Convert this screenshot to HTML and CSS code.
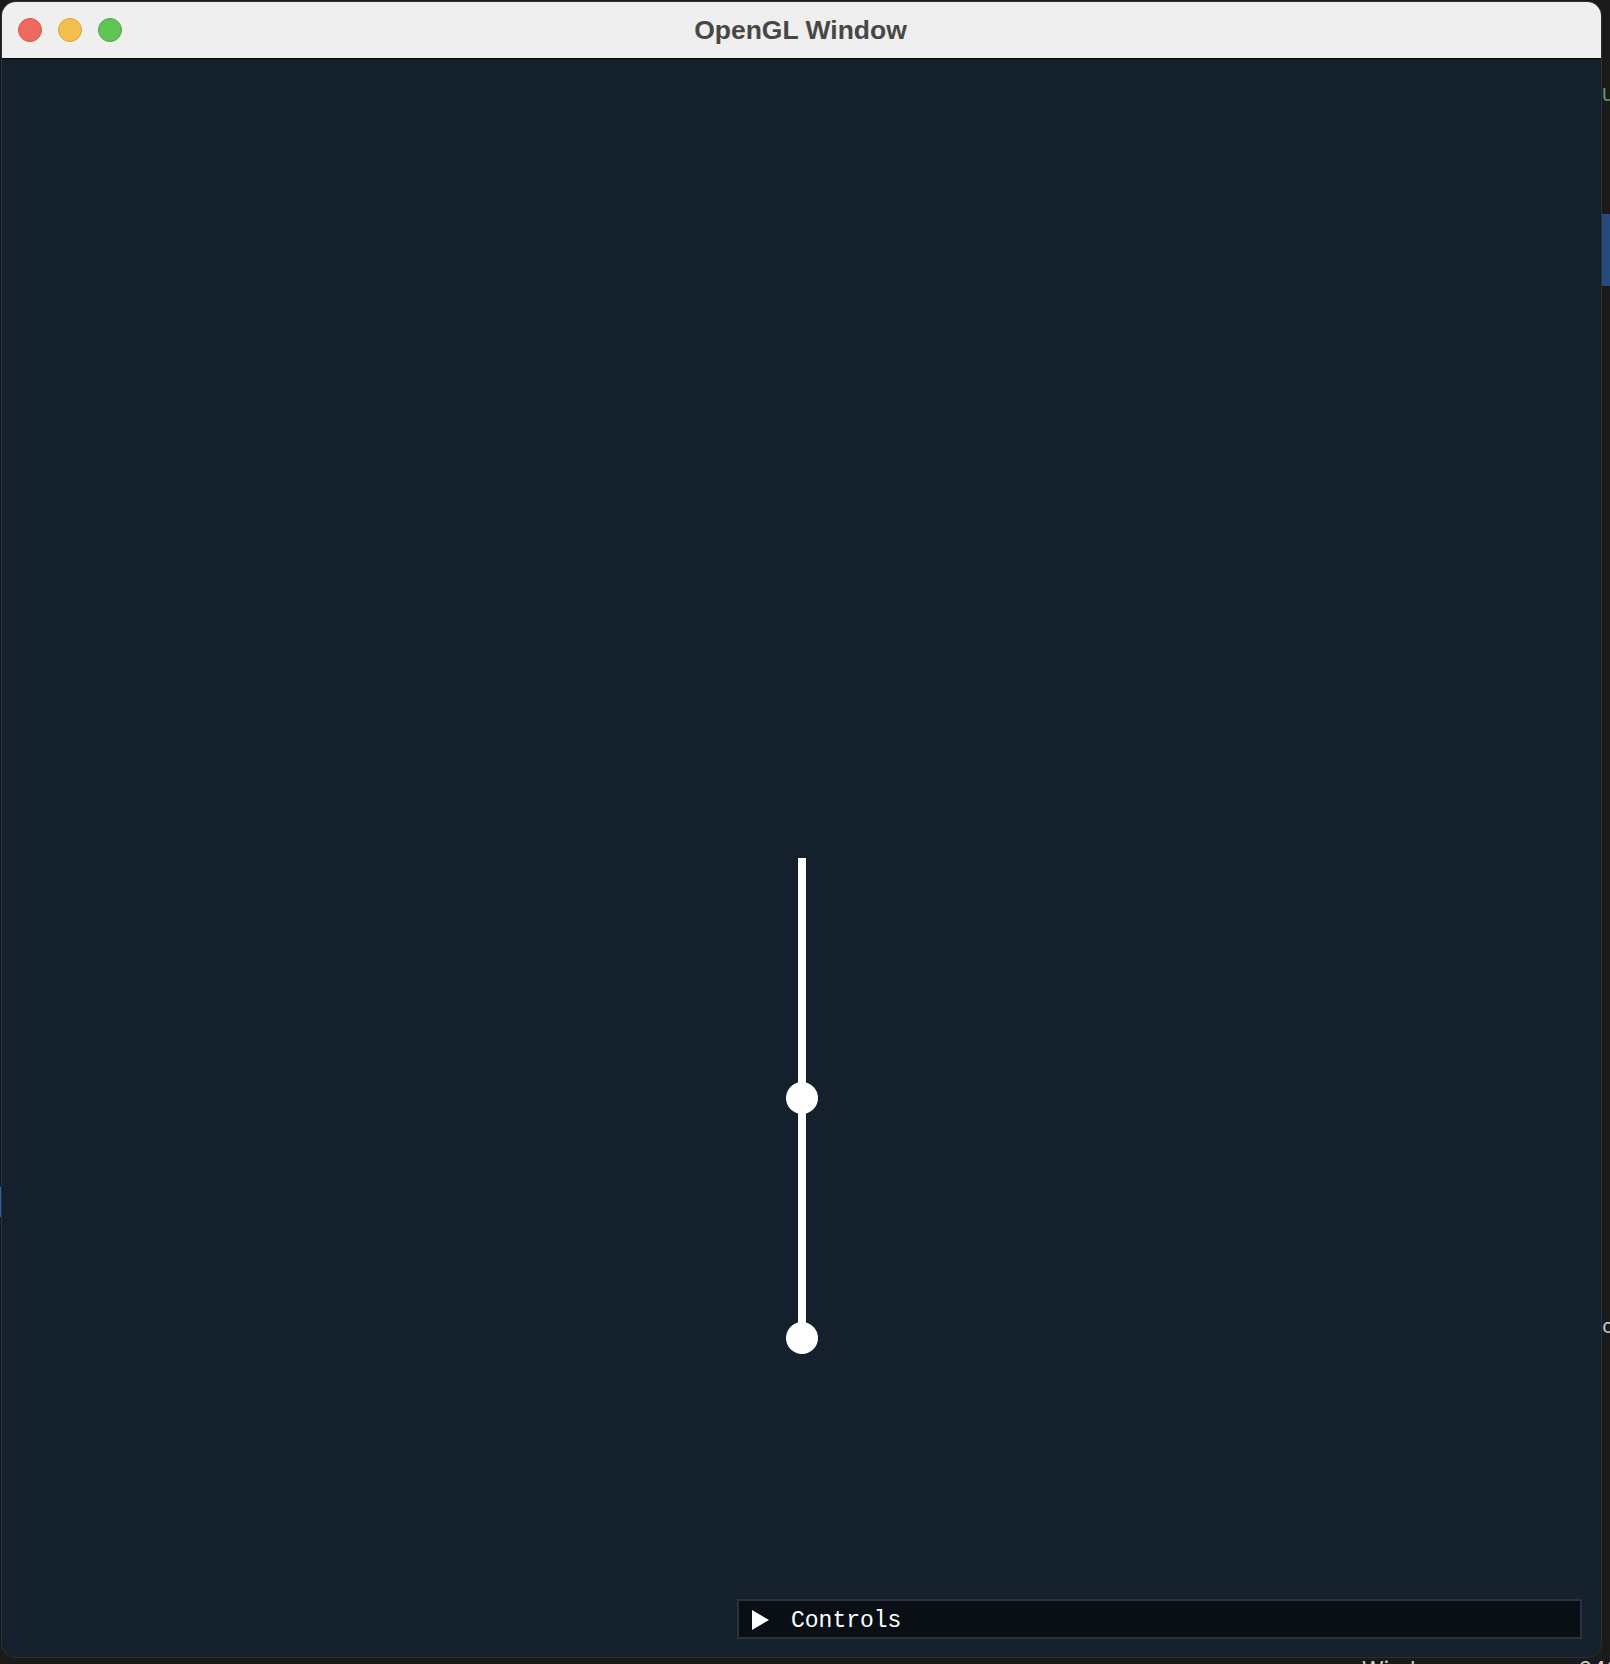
FILE: index.html
```html
<!DOCTYPE html>
<html>
<head>
<meta charset="utf-8">
<title>OpenGL Window</title>
<link rel="stylesheet" href="styles.css">
</head>
<body>
<div class="desk">
  <div class="bg-patch bg-right-blue"></div>
  <div class="bg-patch bg-left-blue"></div>
  <div class="bg-glyph bg-u">U</div>
  <div class="bg-glyph bg-c">c</div>
  <div class="bg-bottom-text"><span>Window</span><span class="num">640</span></div>
  <div class="window">
    <div class="titlebar">
      <div class="lights">
        <span class="light red"></span>
        <span class="light yellow"></span>
        <span class="light green"></span>
      </div>
      <div class="title">OpenGL Window</div>
    </div>
    <div class="content">
      <svg class="scene" width="1599" height="1598" viewBox="0 0 1599 1598">
        <rect x="796" y="799" width="8" height="480" fill="#ffffff"/>
        <circle cx="800" cy="1039" r="16" fill="#ffffff"/>
        <circle cx="800" cy="1279" r="16" fill="#ffffff"/>
      </svg>
      <div class="controls">
        <svg class="arrow" width="18" height="20" viewBox="0 0 18 20"><polygon points="0,0 17,10 0,20" fill="#ffffff"/></svg>
        <span class="label">Controls</span>
      </div>
    </div>
  </div>
</div>
</body>
</html>
```
FILE: styles.css
```css
html, body {
  margin: 0;
  padding: 0;
}
body {
  background: #1a1a1a;
  width: 1610px;
  height: 1664px;
  overflow: hidden;
}
.desk {
  position: relative;
  width: 1610px;
  height: 1664px;
  padding: 2px 0 0 2px;
  box-sizing: border-box;
}
.bg-patch {
  position: absolute;
}
.bg-right-blue {
  left: 1602px;
  top: 214px;
  width: 8px;
  height: 72px;
  background: #264a7c;
}
.bg-left-blue {
  left: 0;
  top: 1187px;
  width: 2px;
  height: 30px;
  background: #2a63b5;
}
.bg-glyph {
  position: absolute;
  font-family: "Liberation Mono", monospace;
  font-size: 20px;
}
.bg-u {
  left: 1602px;
  top: 84px;
  color: #5f9a6a;
}
.bg-c {
  left: 1602px;
  top: 1316px;
  color: #c8c8c8;
}
.bg-bottom-text {
  position: absolute;
  left: 1362px;
  top: 1658px;
  width: 248px;
  display: flex;
  justify-content: space-between;
  font-family: "Inter", "Liberation Sans", sans-serif;
  font-size: 22px;
  line-height: 22px;
  color: #d0d0d0;
}
.bg-bottom-text .num {
  margin-right: -10px;
}
.window {
  position: relative;
  width: 1599px;
  height: 1655px;
  border-radius: 14px;
  overflow: hidden;
  display: flex;
  flex-direction: column;
  background: #14202b;
  box-shadow: 0 0 0 1px #2a3038;
}
.titlebar {
  position: relative;
  height: 56px;
  flex: none;
  background: #efefef;
  border-bottom: 1px solid #050505;
  display: flex;
  align-items: center;
  justify-content: center;
}
.lights {
  position: absolute;
  left: 16px;
  top: 16px;
  display: flex;
  gap: 16px;
}
.light {
  width: 24px;
  height: 24px;
  border-radius: 50%;
  box-sizing: border-box;
}
.red {
  background: #ee6a5f;
  border: 1px solid #d6554b;
}
.yellow {
  background: #f5bf4f;
  border: 1px solid #d9a33a;
}
.green {
  background: #61c554;
  border: 1px solid #4ea843;
}
.title {
  font-family: "Liberation Sans", Arial, sans-serif;
  font-weight: bold;
  font-size: 26.5px;
  color: #474747;
  margin-left: -2px;
}
.content {
  position: relative;
  flex: 1;
  display: flex;
  flex-direction: column;
  justify-content: flex-end;
  align-items: flex-end;
  padding: 0 19px 18px 0;
}
.scene {
  position: absolute;
  left: 0;
  top: 0;
}
.controls {
  position: relative;
  width: 845px;
  height: 40px;
  box-sizing: border-box;
  border: 2px solid #2b323d;
  background: #0a0f16;
  display: flex;
  align-items: center;
  padding-left: 13px;
}
.arrow {
  flex: none;
  margin-top: 1px;
}
.label {
  margin-left: 21px;
  margin-top: 4px;
  font-family: "Liberation Mono", "DejaVu Sans Mono", monospace;
  font-size: 23px;
  color: #ffffff;
  line-height: 1;
}
```
